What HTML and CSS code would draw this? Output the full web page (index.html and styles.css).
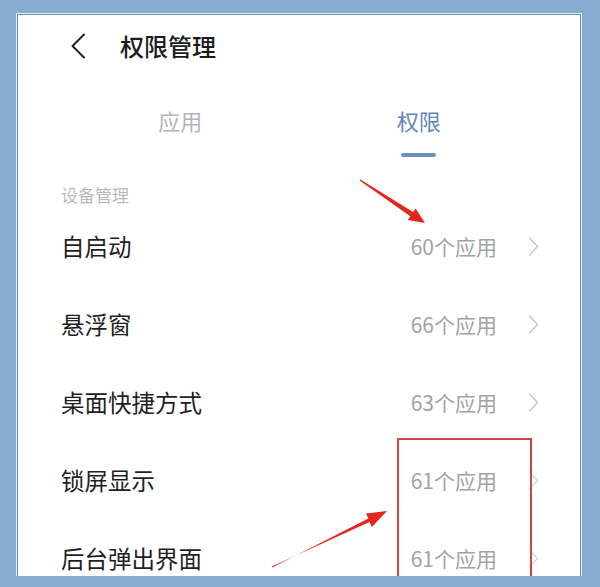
FILE: index.html
```html
<!DOCTYPE html>
<html lang="zh-CN">
<head>
<meta charset="utf-8">
<title>权限管理</title>
<link rel="stylesheet" href="styles.css">
</head>
<body>
<div class="frame">
  <header class="header">
    <svg class="back" width="16" height="26" viewBox="0 0 16 26"><path d="M14 1.5 L2.5 13 L14 24.5" fill="none" stroke="#222" stroke-width="2" stroke-linecap="round" stroke-linejoin="round"/></svg>
    <h1 class="title">权限管理</h1>
  </header>
  <nav class="tabs">
    <div class="tab"><span class="tab-text">应用</span><span class="tab-line"></span></div>
    <div class="tab active"><span class="tab-text">权限</span><span class="tab-line"></span></div>
  </nav>
  <div class="section">设备管理</div>
  <ul class="list">
    <li class="row"><span class="label">自启动</span><span class="value">60个应用</span><svg class="chev" width="11" height="19" viewBox="0 0 11 19"><path d="M1.5 1 L9.5 9.5 L1.5 18" fill="none" stroke="#c9c9c9" stroke-width="1.6" stroke-linecap="round" stroke-linejoin="round"/></svg></li>
    <li class="row"><span class="label">悬浮窗</span><span class="value">66个应用</span><svg class="chev" width="11" height="19" viewBox="0 0 11 19"><path d="M1.5 1 L9.5 9.5 L1.5 18" fill="none" stroke="#c9c9c9" stroke-width="1.6" stroke-linecap="round" stroke-linejoin="round"/></svg></li>
    <li class="row"><span class="label">桌面快捷方式</span><span class="value">63个应用</span><svg class="chev" width="11" height="19" viewBox="0 0 11 19"><path d="M1.5 1 L9.5 9.5 L1.5 18" fill="none" stroke="#c9c9c9" stroke-width="1.6" stroke-linecap="round" stroke-linejoin="round"/></svg></li>
    <li class="row"><span class="label">锁屏显示</span><span class="value">61个应用</span><svg class="chev faint" width="11" height="19" viewBox="0 0 11 19"><path d="M1.5 1 L9.5 9.5 L1.5 18" fill="none" stroke="#c9c9c9" stroke-width="1.6" stroke-linecap="round" stroke-linejoin="round"/></svg></li>
    <li class="row"><span class="label">后台弹出界面</span><span class="value">61个应用</span><svg class="chev faint" width="11" height="19" viewBox="0 0 11 19"><path d="M1.5 1 L9.5 9.5 L1.5 18" fill="none" stroke="#c9c9c9" stroke-width="1.6" stroke-linecap="round" stroke-linejoin="round"/></svg></li>
  </ul>
  <div class="highlight"></div>
</div>
<svg class="arrows" width="600" height="587" viewBox="0 0 600 587">
  <polygon points="360.4,179.4 413.1,212.1 415.6,208.4 425,223 407.8,220.1 410.3,216.3 359.6,180.6" fill="#e2261d"/>
  <polygon points="272.3,567.6 368.4,518.5 366.0,513.5 387,511 371.8,526.9 369.5,522.0 271.7,566.4" fill="#e2261d"/>
</svg>
</body>
</html>
```
FILE: styles.css
```css
* { box-sizing: border-box; }
html, body { margin: 0; padding: 0; }
body {
  width: 600px;
  height: 587px;
  overflow: hidden;
  background: #88acd0;
  font-family: "Noto Sans CJK SC", "Noto Sans", sans-serif;
  position: relative;
  padding: 13px 0 0 16px;
}
.frame {
  position: relative;
  width: 566px;
  height: 563px;
  background: #fff;
  border: 1px solid #d9f3fb;
  border-bottom: none;
  box-shadow: inset 1px 1px 0 #6f8ea9, inset -1px 0 0 #6f8ea9;
  overflow: hidden;
  padding: 1px 1px 0 1px;
}
.header {
  height: 62px;
  display: flex;
  align-items: center;
  padding-left: 52px;
  gap: 34px;
}
.back { display: block; }
.title {
  margin: 0;
  font-size: 24px;
  font-weight: 500;
  color: #1b1b1b;
  line-height: 30px;
}
.tabs {
  display: flex;
  padding: 28px 42px 0 43px;
}
.tab {
  flex: 1;
  display: flex;
  flex-direction: column;
  align-items: center;
}
.tab-text {
  font-size: 22px;
  line-height: 30px;
  color: #b4b4b4;
}
.tab-line {
  margin-top: 18px;
  width: 35px;
  height: 4px;
  border-radius: 2px;
  background: transparent;
}
.tab.active .tab-text { color: #6187bb; }
.tab.active .tab-line { background: #6a8fc4; }
.section {
  margin-top: 26px;
  padding-left: 43px;
  font-size: 17px;
  line-height: 24px;
  color: #b9b9b9;
}
.list {
  list-style: none;
  margin: 0;
  padding: 0 41px 0 43px;
}
.row {
  height: 78px;
  display: flex;
  align-items: center;
}
.label {
  flex: 1;
  font-size: 23.5px;
  color: #1f1f1f;
}
.value {
  font-size: 21px;
  color: #a3a3a3;
  margin-right: 31px;
}
.chev { display: block; }
.chev.faint { opacity: 0.7; }
.highlight {
  position: absolute;
  left: 380px;
  top: 424px;
  width: 135px;
  height: 200px;
  border: 2px solid #d2453f;
}
.arrows {
  position: absolute;
  left: 0;
  top: 0;
  pointer-events: none;
}
```
